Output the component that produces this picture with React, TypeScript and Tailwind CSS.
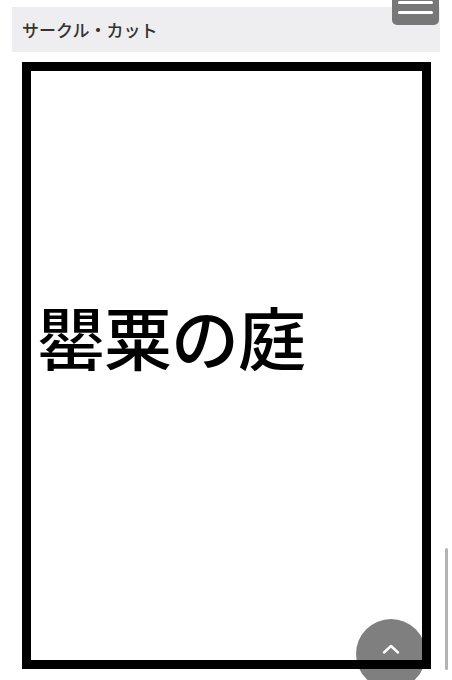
export default function App() {
  return (
    <div
      className="relative w-[452px] h-[680px] overflow-hidden bg-white"
      style={{ fontFamily: '"Noto Sans CJK JP", "Noto Sans", sans-serif' }}
    >
      {/* heading band */}
      <div className="mx-[12px] mt-[7px] h-[45px] bg-[#eeedef] flex items-center pl-[10px]">
        <h2 className="text-[17px] leading-none font-medium text-[#333]">サークル・カット</h2>
      </div>

      {/* cut frame */}
      <div className="ml-[22px] mt-[10px] w-[409px] h-[607px] border-[9px] border-black">
        <p className="mt-[231px] pl-[6px] text-[68px] leading-none font-medium text-black tracking-[-1px]">
          罌粟の庭
        </p>
      </div>

      {/* menu button */}
      <button className="absolute right-[13px] top-[-10px] w-[47px] h-[35px] rounded-[5px] bg-[#777] flex flex-col items-center justify-end gap-[7px] pb-[11px]">
        <span className="block w-[35px] h-[3px] rounded-full bg-white" />
        <span className="block w-[35px] h-[3px] rounded-full bg-white" />
      </button>

      {/* scroll bar */}
      <div className="absolute right-[4px] top-[548px] w-[3px] h-[122px] rounded-full bg-[#b3b3b3]" />

      {/* back to top */}
      <button className="absolute left-[356px] top-[619px] w-[70px] h-[70px] rounded-full bg-black/50 flex justify-center pt-[25px]">
        <svg width="18" height="10" viewBox="0 0 18 10" fill="none">
          <path d="M2 8.5 L9 2 L16 8.5" stroke="white" strokeWidth="2.4" strokeLinecap="round" strokeLinejoin="round" />
        </svg>
      </button>
    </div>
  );
}
